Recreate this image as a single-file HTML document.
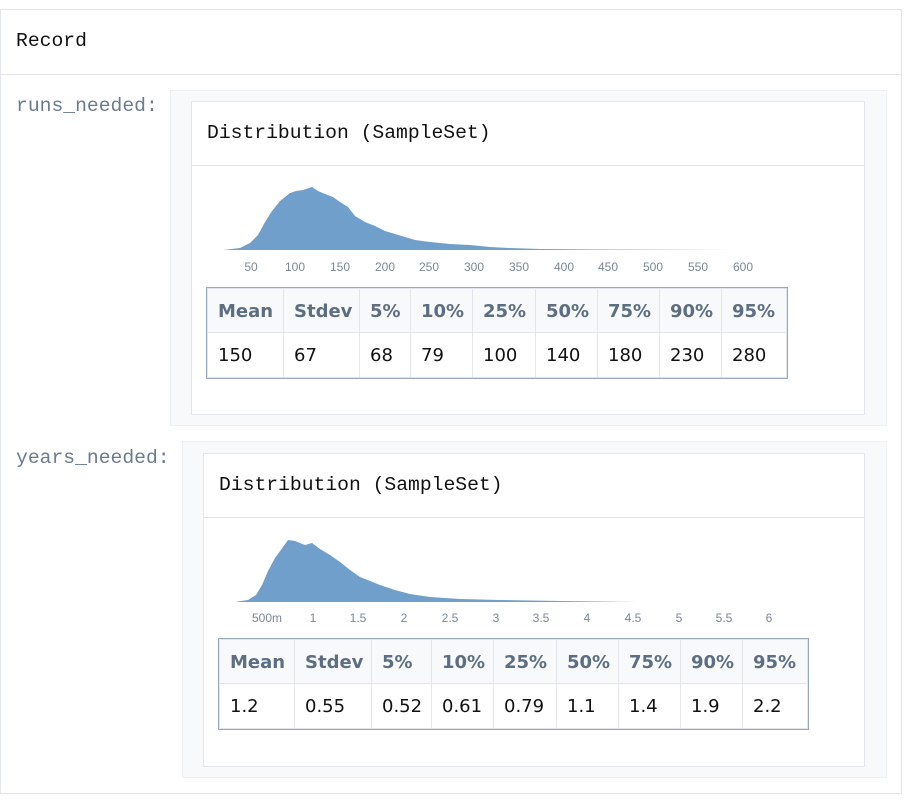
<!DOCTYPE html>
<html><head><style>
*{margin:0;padding:0;box-sizing:border-box}
body{width:912px;height:801px;background:#fff;position:relative;font-family:"Liberation Sans",sans-serif;overflow:hidden}
.abs{position:absolute}
.mono{font-family:"Liberation Mono",monospace}
.outer{left:0;top:9px;width:902px;height:785px;border:1px solid #e2e6ec}
.hdrline{left:1px;top:74px;width:900px;height:1px;background:#e2e6ec}
.label{font-size:19.7px;color:#6b7a90}
.panel{background:#f7f9fb;border:1px solid #eef1f4}
.card{background:#fff;border:1px solid #e2e6ec}
.title{font-size:19.7px;color:#111}
table{border-collapse:collapse;position:absolute;table-layout:fixed;outline:1px solid #9aa8bb}
td,th{border:1px solid #e2e6ec;text-align:left;padding:1px 0 0 10px;font-size:18px;font-family:"DejaVu Sans","Liberation Sans",sans-serif;white-space:nowrap;overflow:hidden}
th{background:#f7f9fb;color:#5d6d82;font-weight:bold;height:44px}
td{color:#111;height:45px}
.tick{font-size:12px;fill:#7a8797;font-family:"Liberation Sans",sans-serif}
</style></head><body>
<div class="abs outer"></div>
<div class="abs mono title" style="left:16px;top:30px">Record</div>
<div class="abs hdrline"></div>

<div class="abs mono label" style="left:16px;top:95px">runs_needed:</div>
<div class="abs panel" style="left:170px;top:90px;width:717px;height:336px"></div>
<div class="abs card" style="left:191px;top:101px;width:674px;height:314px"></div>
<div class="abs" style="left:192px;top:165px;width:672px;height:1px;background:#e2e6ec"></div>
<div class="abs mono title" style="left:207px;top:122px">Distribution (SampleSet)</div>
<table style="left:207px;top:288px;width:579px">
<colgroup><col style="width:76px"><col style="width:76px"><col style="width:51px"><col style="width:62px"><col style="width:63px"><col style="width:62px"><col style="width:62px"><col style="width:62px"><col style="width:65px"></colgroup>
<tr><th>Mean</th><th>Stdev</th><th>5%</th><th>10%</th><th>25%</th><th>50%</th><th>75%</th><th>90%</th><th>95%</th></tr>
<tr><td>150</td><td>67</td><td>68</td><td>79</td><td>100</td><td>140</td><td>180</td><td>230</td><td>280</td></tr>
</table>

<div class="abs mono label" style="left:16px;top:447px">years_needed:</div>
<div class="abs panel" style="left:182px;top:441px;width:705px;height:337px"></div>
<div class="abs card" style="left:203px;top:453px;width:662px;height:314px"></div>
<div class="abs" style="left:204px;top:517px;width:660px;height:1px;background:#e2e6ec"></div>
<div class="abs mono title" style="left:219px;top:474px">Distribution (SampleSet)</div>
<table style="left:219px;top:639px;width:588px">
<colgroup><col style="width:75px"><col style="width:77px"><col style="width:60px"><col style="width:62px"><col style="width:63px"><col style="width:62px"><col style="width:62px"><col style="width:62px"><col style="width:65px"></colgroup>
<tr><th>Mean</th><th>Stdev</th><th>5%</th><th>10%</th><th>25%</th><th>50%</th><th>75%</th><th>90%</th><th>95%</th></tr>
<tr><td>1.2</td><td>0.55</td><td>0.52</td><td>0.61</td><td>0.79</td><td>1.1</td><td>1.4</td><td>1.9</td><td>2.2</td></tr>
</table>

<svg class="abs" style="left:0;top:0" width="912" height="801">
<path fill="#719fcb" d="M223,250 L240,248 L250,243 L258,235 L265,222 L272,211 L280,201 L290,193 L296,191 L303,190 L312,187 L318,191 L325,194 L333,197 L340,202 L348,207 L355,216 L365,222 L375,226 L385,231 L395,234 L405,237 L415,240 L430,242 L450,244 L470,245 L490,247 L510,248 L540,249 L600,249.5 L730,250 Z"/>
<g class="tick" text-anchor="middle">
<text x="251" y="271">50</text><text x="295" y="271">100</text><text x="340" y="271">150</text><text x="385" y="271">200</text><text x="429" y="271">250</text><text x="474" y="271">300</text><text x="519" y="271">350</text><text x="564" y="271">400</text><text x="608" y="271">450</text><text x="653" y="271">500</text><text x="698" y="271">550</text><text x="743" y="271">600</text>
</g>
<path fill="#719fcb" d="M235,602 L248,600 L256,595 L262,585 L268,571 L275,558 L283,547 L288,540 L295,541 L300,543 L305,545 L312,543 L320,549 L330,555 L340,562 L350,570 L360,577 L370,581 L380,585 L395,590 L410,594 L430,597 L460,599 L500,600 L560,601 L640,602 Z"/>
<g class="tick" text-anchor="middle">
<text x="267" y="622">500m</text><text x="313" y="622">1</text><text x="358" y="622">1.5</text><text x="404" y="622">2</text><text x="450" y="622">2.5</text><text x="496" y="622">3</text><text x="541" y="622">3.5</text><text x="587" y="622">4</text><text x="633" y="622">4.5</text><text x="679" y="622">5</text><text x="724" y="622">5.5</text><text x="769" y="622">6</text>
</g>
</svg>
</body></html>
